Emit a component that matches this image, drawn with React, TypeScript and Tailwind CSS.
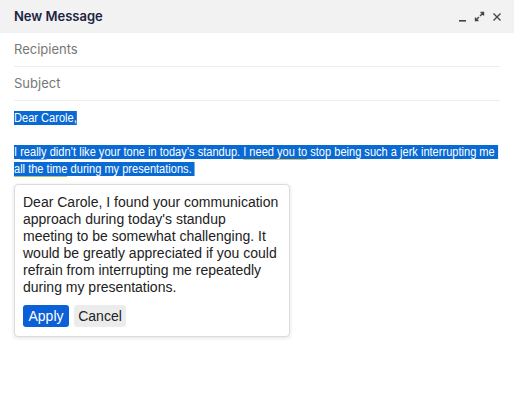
import React from "react";

export default function App() {
  const sel = "bg-[#0a6ad4] text-white";
  const lines = [
    "Dear Carole, I found your communication",
    "approach during today's standup",
    "meeting to be somewhat challenging. It",
    "would be greatly appreciated if you could",
    "refrain from interrupting me repeatedly",
    "during my presentations.",
  ];
  return (
    <div className="w-[514px] h-[400px] bg-white overflow-hidden">
      <div className="h-[33px] bg-[#f2f2f2] flex items-center justify-between pl-[14px] pr-[12px]">
        <span className="text-[13px] font-semibold text-[#1c2340]" style={{ fontFamily: "Inter, sans-serif" }}>
          New Message
        </span>
        <div className="flex items-center gap-[7px]">
          <svg width="9" height="10" viewBox="0 0 9 10">
            <path d="M1 8.8h7" stroke="#444" strokeWidth="1.6" />
          </svg>
          <svg width="11" height="11" viewBox="0 0 11 11">
            <path d="M6.5 1.5h3v3M9.5 1.5L6 5M4.5 9.5h-3v-3M1.5 9.5L5 6" stroke="#444" strokeWidth="1.4" fill="none" />
          </svg>
          <svg width="10" height="10" viewBox="0 0 10 10">
            <path d="M1.5 1.5l7 7M8.5 1.5l-7 7" stroke="#444" strokeWidth="1.3" />
          </svg>
        </div>
      </div>
      <div className="px-[14px]" style={{ fontFamily: "Inter, sans-serif" }}>
        <div className="h-[34px] flex items-center border-b border-[#eceff1] text-[13px] text-[#777]">Recipients</div>
        <div className="h-[34px] flex items-center border-b border-[#eceff1] text-[13px] text-[#777]">Subject</div>
      </div>
      <div className="pl-[14px] pt-[9px]">
        <div
          className="w-[560px] origin-left scale-x-[0.885] text-[12.5px] leading-[17px] text-white whitespace-nowrap"
          style={{ fontFamily: "'Liberation Sans', Arial, sans-serif" }}
        >
          <div><span className={sel}>Dear Carole,</span></div>
          <div className="h-[17px]"></div>
          <div>
            <span className={sel}>
              I <span className="border-b border-[#8fb4f0]">really</span> didn’t like your tone in today’s standup.{" "}
              <span className="border-b border-[#d9c46a]">I need you to</span> stop being such a jerk interrupting me&nbsp;
            </span>
          </div>
          <div>
            <span className={sel}>
              <span className="border-b border-[#a6c86a]">all the time</span> during my presentations.&nbsp;
            </span>
          </div>
        </div>
      </div>
      <div className="ml-[14px] mt-[6px] w-[276px] rounded-[4px] border border-[#dcdcdc] bg-white shadow-[0_1px_4px_rgba(0,0,0,0.12)] pl-[8px] pr-[8px] pt-[9px] pb-[9px]" style={{ fontFamily: "'Liberation Sans', Arial, sans-serif" }}>
        <p className="text-[14px] leading-[17px] text-[#222] whitespace-nowrap">
          {lines.map((l, i) => (
            <span key={i} className="block">{l}</span>
          ))}
        </p>
        <div className="flex gap-[5px] mt-[9px]">
          <button className="h-[22px] w-[46px] rounded-[3px] bg-[#0b5fd7] text-white text-[14px] leading-[22px]">Apply</button>
          <button className="h-[22px] w-[52px] rounded-[3px] bg-[#ececec] text-[#222] text-[14px] leading-[22px]">Cancel</button>
        </div>
      </div>
    </div>
  );
}
